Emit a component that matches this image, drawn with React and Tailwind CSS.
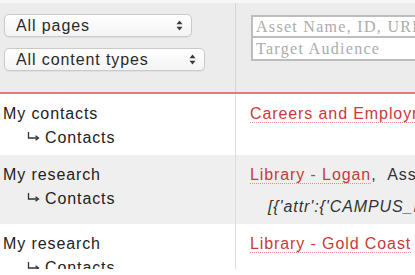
import React from "react";

const SelectArrows = () => (
  <svg width="7" height="11" viewBox="0 0 7 11" className="shrink-0">
    <path d="M3.5 0.5 L6.5 4.2 H0.5 Z" fill="#3a3a3a" />
    <path d="M3.5 10.5 L6.5 6.8 H0.5 Z" fill="#3a3a3a" />
  </svg>
);

const SubArrow = () => (
  <svg width="13" height="9" viewBox="0 0 13 9" className="mt-[-3px] mr-[5px] shrink-0">
    <path d="M1.5 0 V6 H11" fill="none" stroke="#333" strokeWidth="1.3" />
    <path d="M8.5 3.8 L11.5 6 L8.5 8.2" fill="none" stroke="#333" strokeWidth="1.3" />
  </svg>
);

const FakeSelect = ({ label, width }) => (
  <div
    className={`flex items-center justify-between h-[23px] ${width} pl-[11px] pr-[8px] rounded-[5px] border border-[#cacaca] bg-gradient-to-b from-white to-[#f4f4f4] shadow-[0_1px_1px_rgba(0,0,0,0.06)]`}
  >
    <span className="text-[16px] leading-none text-[#2a2a2a]">{label}</span>
    <SelectArrows />
  </div>
);

const Link = ({ children }) => (
  <span className="text-[#c93a3a] border-b border-dotted border-[#e58a8a] leading-[17px]">
    {children}
  </span>
);

const rows = [
  {
    page: "My contacts",
    sub: "Contacts",
    bg: "bg-white",
    link: "Careers and Employment",
    extra: null,
    attr: null,
  },
  {
    page: "My research",
    sub: "Contacts",
    bg: "bg-[#efefef]",
    link: "Library - Logan",
    extra: "Assessment",
    attr: "[{'attr':{'CAMPUS_LOGAN':'1'}}]",
  },
  {
    page: "My research",
    sub: "Contacts",
    bg: "bg-white",
    link: "Library - Gold Coast",
    extra: null,
    attr: "[{'attr':{'CAMPUS_GOLDCOAST':'1'}}]",
  },
];

export default function App() {
  return (
    <div className="w-[415px] h-[275px] bg-white">
      <div className="w-[415px] h-[269px] overflow-hidden font-['Liberation_Sans',Arial,sans-serif] text-[16px] tracking-[0.9px] text-[#222]">
        {/* header with filters */}
        <div className="flex h-[94px] bg-[#ececec] border-t-[3px] border-t-[#f7f7f7] border-b-2 border-b-[#e27c7c]">
          <div className="w-[236px] shrink-0 border-r border-[#d4d4d4] pl-[4px] pt-[11px] flex flex-col gap-[11px]">
            <FakeSelect label="All pages" width="w-[188px]" />
            <FakeSelect label="All content types" width="w-[201px]" />
          </div>
          <div className="flex-1 min-w-0 pl-[15px] pt-[12px] flex flex-col">
            <input
              readOnly
              placeholder="Asset Name, ID, URL"
              className="w-[220px] h-[23px] border-2 border-[#bdbdbd] bg-white pl-[3px] font-['Liberation_Serif',serif] text-[16px] tracking-[1.3px] placeholder:text-[#ababab] outline-none"
            />
            <input
              readOnly
              placeholder="Target Audience"
              className="w-[220px] h-[23px] border-2 border-t-0 border-[#bdbdbd] bg-white pl-[3px] font-['Liberation_Serif',serif] text-[16px] tracking-[1.3px] placeholder:text-[#ababab] outline-none"
            />
          </div>
        </div>

        {/* rows */}
        {rows.map((r, i) => (
          <div key={i} className={`flex ${r.bg}`}>
            <div className="w-[236px] shrink-0 border-r border-[#dcdcdc] pl-[3px] pt-[8px] pb-[5px] leading-[24px]">
              <div>{r.page}</div>
              <div className="flex items-center pl-[24px]">
                <SubArrow />
                <span>{r.sub}</span>
              </div>
            </div>
            <div className="flex-1 min-w-0 pl-[14px] pt-[8px] pb-[5px] leading-[24px] whitespace-nowrap overflow-hidden">
              <div>
                <Link>{r.link}</Link>
                {r.extra && <span className="text-[#333]">, &nbsp;{r.extra}</span>}
              </div>
              {r.attr && (
                <div className="mt-[8px] pl-[18px] italic text-[#333]">{r.attr}</div>
              )}
            </div>
          </div>
        ))}
      </div>
    </div>
  );
}
